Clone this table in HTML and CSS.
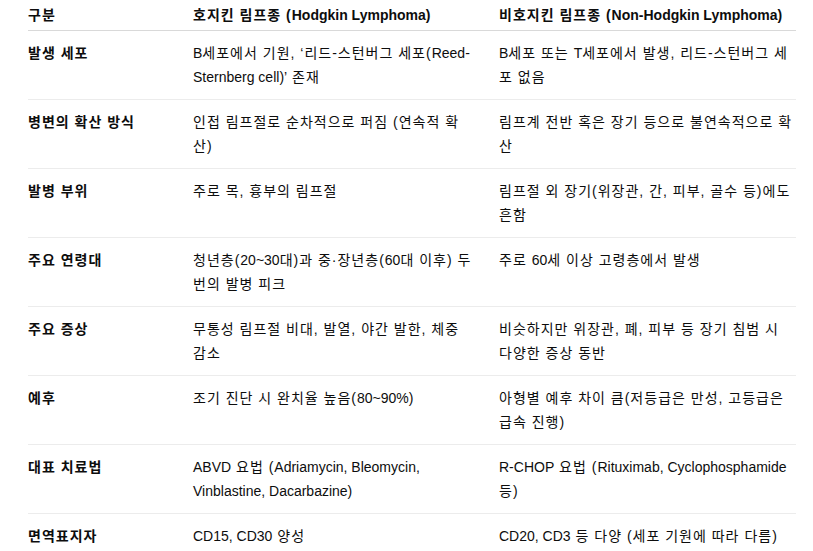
FILE: index.html
```html
<!DOCTYPE html>
<html lang="ko">
<head>
<meta charset="utf-8">
<link rel="stylesheet" href="styles.css">
</head>
<body>
<table class="cmp">
  <colgroup>
    <col class="c1">
    <col class="c2">
    <col class="c3">
  </colgroup>
  <thead>
    <tr><th>구분</th><th>호지킨 림프종 (<span class="en">Hodgkin Lymphoma)</span></th><th>비호지킨 림프종 (<span class="en">Non-Hodgkin Lymphoma)</span></th></tr>
  </thead>
  <tbody>
    <tr><th>발생 세포</th><td><span class="en">B</span>세포에서 기원, ‘리드-스턴버그 세포(<span class="en">Reed-Sternberg cell)’</span> 존재</td><td><span class="en">B</span>세포 또는 <span class="en">T</span>세포에서 발생, 리드-스턴버그 세포 없음</td></tr>
    <tr><th>병변의 확산 방식</th><td>인접 림프절로 순차적으로 퍼짐 (연속적 확산)</td><td>림프계 전반 혹은 장기 등으로 불연속적으로 확산</td></tr>
    <tr><th>발병 부위</th><td>주로 목, 흉부의 림프절</td><td>림프절 외 장기(위장관, 간, 피부, 골수 등)에도 흔함</td></tr>
    <tr><th>주요 연령대</th><td>청년층(<span class="en">20~30</span>대)과 중·장년층(<span class="en">60</span>대 이후) 두 번의 발병 피크</td><td>주로 <span class="en">60</span>세 이상 고령층에서 발생</td></tr>
    <tr><th>주요 증상</th><td>무통성 림프절 비대, 발열, 야간 발한, 체중 감소</td><td>비슷하지만 위장관, 폐, 피부 등 장기 침범 시 다양한 증상 동반</td></tr>
    <tr><th>예후</th><td>조기 진단 시 완치율 높음(<span class="en">80~90%)</span></td><td>아형별 예후 차이 큼(저등급은 만성, 고등급은 급속 진행)</td></tr>
    <tr><th>대표 치료법</th><td><span class="en">ABVD</span> 요법 (<span class="en">Adriamycin, Bleomycin, Vinblastine, Dacarbazine)</span></td><td><span class="en">R-CHOP</span> 요법 (<span class="en">Rituximab, Cyclophosphamide</span> 등)</td></tr>
    <tr><th>면역표지자</th><td><span class="en">CD15, CD30</span> 양성</td><td><span class="en">CD20, CD3</span> 등 다양 (세포 기원에 따라 다름)</td></tr>
  </tbody>
</table>
</body>
</html>
```
FILE: styles.css
```css
html, body {
  margin: 0;
  padding: 0;
  background: #ffffff;
}
body {
  font-family: "Liberation Sans", "Noto Sans CJK KR", sans-serif;
  font-size: 14px;
  line-height: 24px;
  color: #0d0d0d;
}
.cmp {
  margin-left: 28px;
  width: 768px;
  border-collapse: collapse;
  table-layout: fixed;
  letter-spacing: 1px;
}
.en {
  letter-spacing: 0;
}
.c1 { width: 149px; }
.c2 { width: 306px; }
.c3 { width: 313px; }
.cmp th,
.cmp td {
  text-align: left;
  vertical-align: top;
  padding: 10px 8px 10px 16px;
}
.cmp th {
  font-weight: 700;
}
.cmp td {
  font-weight: 400;
}
.cmp tr > :first-child {
  padding-left: 0;
  padding-right: 16px;
}
.cmp tr > :last-child {
  padding-right: 0;
}
.cmp thead th {
  padding-top: 3px;
  padding-bottom: 3px;
  border-bottom: 1px solid #d9d9d9;
}
.cmp tbody tr {
  border-bottom: 1px solid #ececec;
}
```
